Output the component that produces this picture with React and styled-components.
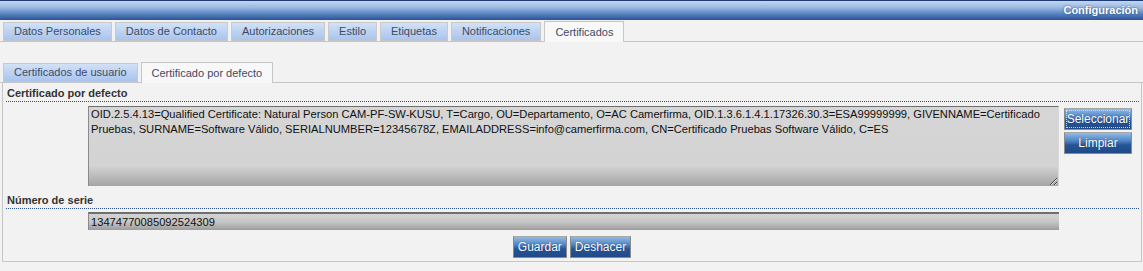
import styled, { createGlobalStyle } from 'styled-components';

const GlobalStyle = createGlobalStyle`
    html, body {
        margin: 0;
        padding: 0;
        background: #f2f2f2;
        font-family: "Liberation Sans", Arial, sans-serif;
    }
`;

const outerTabs = ['Datos Personales', 'Datos de Contacto', 'Autorizaciones', 'Estilo', 'Etiquetas', 'Notificaciones', 'Certificados'];
const innerTabs = ['Certificados de usuario', 'Certificado por defecto'];

const certText = 'OID.2.5.4.13=Qualified Certificate: Natural Person CAM-PF-SW-KUSU, T=Cargo, OU=Departamento, O=AC Camerfirma, OID.1.3.6.1.4.1.17326.30.3=ESA99999999, GIVENNAME=Certificado Pruebas, SURNAME=Software Válido, SERIALNUMBER=12345678Z, EMAILADDRESS=info@camerfirma.com, CN=Certificado Pruebas Software Válido, C=ES';

export default function App() {
    return (
        <Page>
            <GlobalStyle />
            <Header>Configuración</Header>
            <TabBar>
                {outerTabs.map((t) => (
                    <Tab key={t} $active={t === 'Certificados'}>{t}</Tab>
                ))}
            </TabBar>
            <TabBar $inner>
                {innerTabs.map((t) => (
                    <Tab key={t} $active={t === 'Certificado por defecto'}>{t}</Tab>
                ))}
            </TabBar>
            <Panel>
                <SectionTitle>Certificado por defecto</SectionTitle>
                <FieldRow>
                    <CertArea readOnly value={certText} />
                    <SideButtons>
                        <Button $wide $focused>Seleccionar</Button>
                        <Button $wide>Limpiar</Button>
                    </SideButtons>
                </FieldRow>
                <SectionTitle $spaced>Número de serie</SectionTitle>
                <FieldRow>
                    <SerialInput readOnly value="13474770085092524309" />
                </FieldRow>
                <Actions>
                    <Button>Guardar</Button>
                    <Button>Deshacer</Button>
                </Actions>
            </Panel>
        </Page>
    );
}

const Page = styled.div`
    height: 271px;
    background: #f2f2f2;
    overflow: hidden;
`;

const Header = styled.div`
    height: 19px;
    border-top: 1px solid #1d3b74;
    background: linear-gradient(#c4d6ef 0%, #9ab8e2 35%, #5580be 70%, #2b5395 100%);
    color: #fff;
    font-size: 11px;
    font-weight: bold;
    line-height: 18px;
    text-align: right;
    padding-right: 5px;
    text-shadow: 0 0 2px #1d3b74;
`;

const TabBar = styled.div`
    display: flex;
    align-items: flex-end;
    gap: 3px;
    height: 19px;
    margin-top: ${(p) => (p.$inner ? '21px' : '2px')};
    padding-left: 3px;
    border-bottom: 1px solid #c6c6c6;
`;

const Tab = styled.div`
    box-sizing: border-box;
    height: ${(p) => (p.$active ? '21px' : '19px')};
    margin-bottom: ${(p) => (p.$active ? '-1px' : '0')};
    padding: 0 10px;
    border: 1px solid ${(p) => (p.$active ? '#c6c6c6' : '#c9c9c9')};
    border-bottom: ${(p) => (p.$active ? 'none' : '1px solid #c6c6c6')};
    background: ${(p) => (p.$active ? '#f8f8f8' : 'linear-gradient(#d2e1f6, #a9c4ee)')};
    color: #3d4a66;
    font-size: 11px;
    line-height: ${(p) => (p.$active ? '20px' : '17px')};
    white-space: nowrap;
`;

const Panel = styled.div`
    margin: 0 1px 0 2px;
    padding: 0 0 3px;
    border: 1px solid #c6c6c6;
    border-top: none;
`;

const SectionTitle = styled.div`
    margin: 0 2px 0 3px;
    padding: ${(p) => (p.$spaced ? '6px' : '2px')} 0 0 1px;
    line-height: 16px;
    font-size: 11px;
    font-weight: bold;
    color: #333;
    border-bottom: 1px dotted #2b4f92;
`;

const FieldRow = styled.div`
    display: flex;
    align-items: flex-start;
    gap: 5px;
    padding-left: 85px;
    margin-top: 4px;
`;

const CertArea = styled.textarea`
    box-sizing: border-box;
    width: 971px;
    height: 80px;
    margin: 0;
    padding: 0 2px;
    border: none;
    border-top: 1px solid #6f6f6f;
    border-left: 1px solid #8a8a8a;
    border-right: 1px solid #d8d8d8;
    background: linear-gradient(#d6d6d6 0%, #d3d3d3 75%, #a4a4a4 100%);
    font-family: "Liberation Sans", Arial, sans-serif;
    font-size: 11.15px;
    line-height: 15px;
    color: #111;
    outline: none;
    overflow: hidden;
`;

const SerialInput = styled.input`
    box-sizing: border-box;
    width: 971px;
    height: 18px;
    margin: -1px 0 0;
    padding: 0 2px;
    border: none;
    border-top: 2px solid #6f6f6f;
    border-left: 1px solid #8a8a8a;
    background: linear-gradient(#d4d4d4 0%, #c6c6c6 50%, #9c9c9c 100%);
    font-family: "Liberation Sans", Arial, sans-serif;
    font-size: 11.15px;
    color: #111;
    outline: none;
`;

const SideButtons = styled.div`
    display: flex;
    flex-direction: column;
    gap: 2px;
    margin-top: 2px;
`;

const Button = styled.button`
    box-sizing: border-box;
    height: 22px;
    width: ${(p) => (p.$wide ? '68px' : 'auto')};
    margin: 0;
    padding: ${(p) => (p.$wide ? '0' : '0 4px')};
    border: 1px solid #8a8a8a;
    border-top-color: #a8a8a8;
    background: linear-gradient(#8fbbe6 0%, #4f83c2 40%, #265495 60%, #1f4a88 100%);
    color: #fff;
    font-family: "Liberation Sans", Arial, sans-serif;
    font-size: 12px;
    text-shadow: 0 0 1px #0e2d5e;
    cursor: pointer;
    outline: ${(p) => (p.$focused ? '1px dotted #c8d8ee' : 'none')};
    outline-offset: -3px;
`;

const Actions = styled.div`
    display: flex;
    justify-content: center;
    gap: 3px;
    margin-top: 6px;
`;
